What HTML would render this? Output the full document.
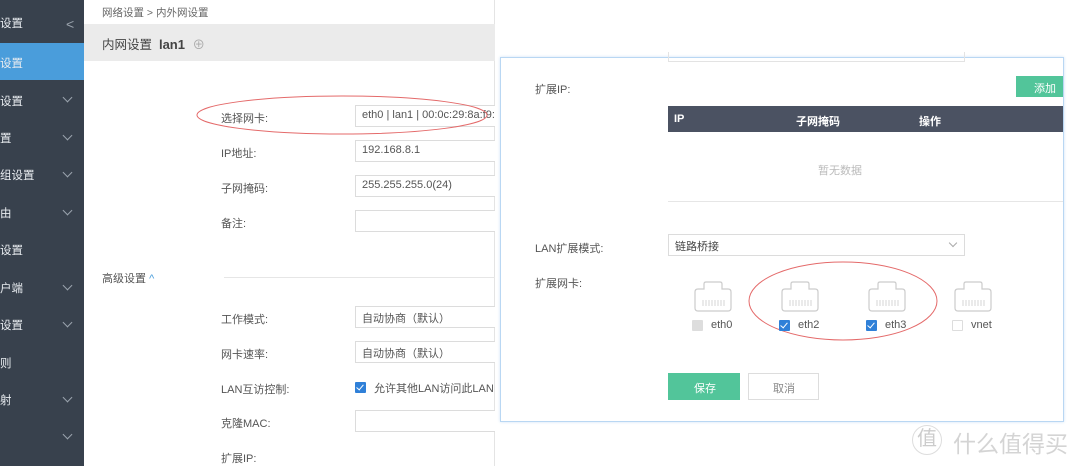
<!DOCTYPE html>
<html><head><meta charset="utf-8"><style>
*{margin:0;padding:0;box-sizing:border-box}
body{width:1080px;height:466px;position:relative;overflow:hidden;background:#fff;font-family:"Liberation Sans","Noto Sans CJK SC",sans-serif;font-size:11px;color:#555}
.a{position:absolute}
.side{left:0;top:0;width:84px;height:466px;background:#38414d}
.si{position:absolute;left:0;color:#e8ecf0;font-size:11.5px}
.chev{position:absolute;left:64px;width:7px;height:7px;border-right:1px solid #9aa3ad;border-bottom:1px solid #9aa3ad;transform:rotate(45deg)}
.lbl{position:absolute;color:#555;font-size:11px}
.inp{position:absolute;border:1px solid #dcdcdc;border-right:none;height:22px;background:#fff;padding:3px 6px;font-size:11px;color:#555;white-space:nowrap;overflow:hidden}
.cb{position:absolute;width:11px;height:11px;border-radius:1px}
.cb.on{background:#2f80d8}
.cb.on:after{content:"";position:absolute;left:3px;top:1px;width:3px;height:6px;border-right:1.5px solid #fff;border-bottom:1.5px solid #fff;transform:rotate(40deg)}
</style></head><body>
<div class="a side"></div>
<div class="si" style="top:15px">设置</div>
<div class="a" style="left:66px;top:16px;color:#9aa3ad;font-size:14px">&lt;</div>
<div class="a" style="left:0;top:43px;width:84px;height:37px;background:#4a9ddb"></div>
<div class="si" style="top:55px">设置</div>
<div class="si" style="top:93px">设置</div><div class="chev" style="top:94px"></div>
<div class="si" style="top:130px">置</div><div class="chev" style="top:132px"></div>
<div class="si" style="top:167px">组设置</div><div class="chev" style="top:169px"></div>
<div class="si" style="top:205px">由</div><div class="chev" style="top:207px"></div>
<div class="si" style="top:242px">设置</div>
<div class="si" style="top:280px">户端</div><div class="chev" style="top:282px"></div>
<div class="si" style="top:317px">设置</div><div class="chev" style="top:319px"></div>
<div class="si" style="top:355px">则</div>
<div class="si" style="top:392px">射</div><div class="chev" style="top:394px"></div>
<div class="chev" style="top:431px"></div>

<div class="a" style="left:84px;top:0;width:411px;height:466px;background:#fff;border-right:1px solid #e4e4e4"></div>
<div class="a" style="left:102px;top:5px;color:#666;font-size:10.5px">网络设置 &gt; 内外网设置</div>
<div class="a" style="left:84px;top:24px;width:411px;height:37px;background:#ebebeb"></div>
<div class="a" style="left:102px;top:34px;color:#444;font-size:12.5px">内网设置 &nbsp;<b style="font-size:13px">lan1</b> <span style="color:#aaa;margin-left:4px">⊕</span></div>
<div class="lbl" style="left:221px;top:110px">选择网卡:</div>
<div class="inp" style="left:355px;top:105px;width:140px">eth0 | lan1 | 00:0c:29:8a:f9:c</div>
<div class="lbl" style="left:221px;top:145px">IP地址:</div>
<div class="inp" style="left:355px;top:140px;width:140px">192.168.8.1</div>
<div class="lbl" style="left:221px;top:180px">子网掩码:</div>
<div class="inp" style="left:355px;top:175px;width:140px">255.255.255.0(24)</div>
<div class="lbl" style="left:221px;top:215px">备注:</div>
<div class="inp" style="left:355px;top:210px;width:140px"></div>
<div class="a" style="left:102px;top:270px;color:#555">高级设置 <span style="color:#4a9ddb">^</span></div>
<div class="a" style="left:224px;top:277px;width:271px;height:1px;background:#e6e6e6"></div>
<div class="lbl" style="left:221px;top:311px">工作模式:</div>
<div class="inp" style="left:355px;top:306px;width:140px">自动协商（默认）</div>
<div class="lbl" style="left:221px;top:346px">网卡速率:</div>
<div class="inp" style="left:355px;top:341px;width:140px">自动协商（默认）</div>
<div class="lbl" style="left:221px;top:381px">LAN互访控制:</div>
<div class="cb on" style="left:355px;top:382px"></div>
<div class="lbl" style="left:374px;top:380px">允许其他LAN访问此LAN</div>
<div class="lbl" style="left:221px;top:415px">克隆MAC:</div>
<div class="inp" style="left:355px;top:410px;width:140px"></div>
<div class="lbl" style="left:221px;top:450px">扩展IP:</div>

<div class="a" style="left:500px;top:57px;width:564px;height:365px;background:#fff;border:1px solid #b9d7f3;box-shadow:0 0 3px #cfe3f7"></div>
<div class="a" style="left:668px;top:52px;width:297px;height:10px;border:1px solid #e3e3e3;border-top:none"></div>
<div class="lbl" style="left:535px;top:81px">扩展IP:</div>
<div class="a" style="left:1016px;top:76px;width:47px;height:21px;background:#52c59a;color:#fff;padding:4px 0 0 18px">添加</div>
<div class="a" style="left:668px;top:106px;width:395px;height:26px;background:#4b5262;color:#fff;font-weight:bold"><span class="a" style="left:6px;top:7px">IP</span><span class="a" style="left:128px;top:7px">子网掩码</span><span class="a" style="left:251px;top:7px">操作</span></div>
<div class="a" style="left:818px;top:162px;color:#bbb">暂无数据</div>
<div class="a" style="left:668px;top:201px;width:395px;height:1px;background:#e6e6e6"></div>
<div class="lbl" style="left:535px;top:240px">LAN扩展模式:</div>
<div class="inp" style="left:668px;top:234px;width:297px;color:#444;border-right:1px solid #dcdcdc">链路桥接</div>
<div class="a" style="left:950px;top:240px;width:6px;height:6px;border-right:1px solid #aaa;border-bottom:1px solid #aaa;transform:rotate(45deg)"></div>
<div class="lbl" style="left:535px;top:275px">扩展网卡:</div>
<svg class="a" style="left:660px;top:260px" width="420" height="90">
<g fill="none" stroke="#ccc" stroke-width="1.2">
<g id="p"><path d="M35 48 L35 32 Q35 29 38 29 L44 29 L44 24 Q44 22 46 22 L60 22 Q62 22 62 24 L62 29 L68 29 Q71 29 71 32 L71 48 Q71 51 68 51 L38 51 Q35 51 35 48Z"/><path d="M43 40v6M46 40v6M49 40v6M52 40v6M55 40v6M58 40v6M61 40v6M64 40v6" stroke-width="0.8"/></g>
<use href="#p" x="87"/><use href="#p" x="174"/><use href="#p" x="260"/>
</g>
<ellipse cx="183" cy="41" rx="94" ry="39" fill="none" stroke="#e46a6a" stroke-width="1"/>
</svg>
<div class="cb" style="left:692px;top:320px;background:#ddd"></div>
<div class="lbl" style="left:711px;top:319px">eth0</div>
<div class="cb on" style="left:779px;top:320px"></div>
<div class="lbl" style="left:798px;top:319px">eth2</div>
<div class="cb on" style="left:866px;top:320px"></div>
<div class="lbl" style="left:885px;top:319px">eth3</div>
<div class="cb" style="left:952px;top:320px;border:1px solid #ddd"></div>
<div class="lbl" style="left:971px;top:319px">vnet</div>
<div class="a" style="left:668px;top:373px;width:72px;height:27px;background:#52c59a;color:#fff;padding:7px 0 0 26px">保存</div>
<div class="a" style="left:748px;top:373px;width:71px;height:27px;border:1px solid #ddd;color:#888;padding:6px 0 0 24px">取消</div>
<svg class="a" style="left:0;top:0" width="1080" height="466"><ellipse cx="342" cy="115" rx="145" ry="19" fill="none" stroke="#e46a6a" stroke-width="1"/></svg>
<div class="a" style="left:912px;top:425px;width:30px;height:30px;border:1.5px solid #ddd;border-radius:50%;color:#ccc;font-size:20px;text-align:center;line-height:26px">值</div>
<div class="a" style="left:953px;top:425px;color:#d4d4d4;font-size:23px">什么值得买</div>
</body></html>
